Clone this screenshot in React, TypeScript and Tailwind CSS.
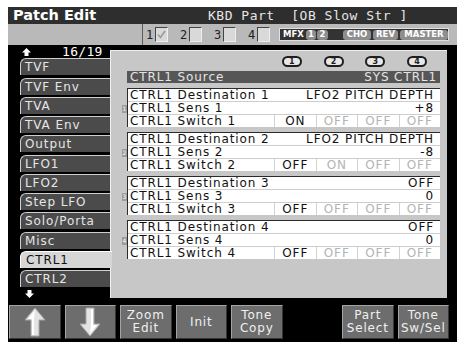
import type { ReactNode } from "react";

const tabs = [
  "TVF",
  "TVF Env",
  "TVA",
  "TVA Env",
  "Output",
  "LFO1",
  "LFO2",
  "Step LFO",
  "Solo/Porta",
  "Misc",
  "CTRL1",
  "CTRL2",
];

type Group = {
  n: number;
  dest: string;
  sens: string;
  sw: string[];
  on: number;
};

const groups: Group[] = [
  { n: 1, dest: "LFO2 PITCH DEPTH", sens: "+8", sw: ["ON", "OFF", "OFF", "OFF"], on: 0 },
  { n: 2, dest: "LFO2 PITCH DEPTH", sens: "-8", sw: ["OFF", "ON", "OFF", "OFF"], on: 0 },
  { n: 3, dest: "OFF", sens: "0", sw: ["OFF", "OFF", "OFF", "OFF"], on: 0 },
  { n: 4, dest: "OFF", sens: "0", sw: ["OFF", "OFF", "OFF", "OFF"], on: 0 },
];

function BigArrow({ down = false }: { down?: boolean }) {
  return (
    <svg width="22" height="30" viewBox="0 0 22 30" className={down ? "rotate-180" : ""} aria-hidden>
      <polygon points="11,1 21,13 15,13 15,29 7,29 7,13 1,13" fill="#e4e4e4" stroke="#a8a8a8" strokeWidth="1" />
      <polygon points="11,3 4,12 8,12 8,28 10,28 10,12" fill="#ffffff" />
    </svg>
  );
}

function SmallArrow({ down = false }: { down?: boolean }) {
  return (
    <svg width="9" height="8" viewBox="0 0 9 8" className={down ? "rotate-180" : ""} aria-hidden>
      <polygon points="4.5,0 9,4.5 6.5,4.5 6.5,8 2.5,8 2.5,4.5 0,4.5" fill="#ffffff" />
    </svg>
  );
}

function PadButton({ children }: { children?: ReactNode }) {
  return (
    <div className="flex h-[34px] flex-col items-center justify-center border border-t-[#a4a4a4] border-l-[#a4a4a4] border-r-[#363636] border-b-[#363636] bg-[#6d6d6d] text-center text-[12px] leading-[13px] tracking-[0.8px] text-[#f0f0f0]">
      {children}
    </div>
  );
}

function Check({ n, checked }: { n: number; checked?: boolean }) {
  return (
    <div className="flex items-center gap-[1px]">
      <span className="w-[8px] font-['DejaVu_Sans_Mono',monospace] text-[12px] leading-none text-[#222]">{n}</span>
      <span className="flex h-[15px] w-[13px] items-center justify-center border border-t-[#444] border-l-[#444] border-r-[#eee] border-b-[#eee] bg-[#d9d9d9]">
        {checked ? (
          <svg width="9" height="9" viewBox="0 0 9 9" aria-hidden>
            <path d="M1 4.5 L3.5 7.5 L8 1" fill="none" stroke="#9a9a9a" strokeWidth="1.6" />
          </svg>
        ) : null}
      </span>
    </div>
  );
}

function Chip({ children, w }: { children: ReactNode; w: string }) {
  return (
    <span className={`flex h-[10px] ${w} items-center justify-center rounded-[3px] bg-[#8e8e8e] text-[8.5px] font-bold leading-none text-white`}>
      {children}
    </span>
  );
}

export default function App() {
  return (
    <div className="h-[346px] w-[457px] overflow-hidden bg-white">
      <div className="ml-[8px] mt-[7px] flex h-[335px] w-[449px] flex-col bg-black font-['DejaVu_Sans',sans-serif]">
        {/* title bar */}
        <div className="flex h-[17px] items-center bg-[#2e2e2e]">
          <span className="w-[200px] pl-[5px] text-[14.5px] font-bold leading-none text-white">Patch Edit</span>
          <span className="whitespace-pre font-['DejaVu_Sans_Mono',monospace] text-[13px] leading-none tracking-[0.5px] text-[#e6e6e6]">
            KBD Part  [OB Slow Str ]
          </span>
        </div>

        {/* part switches + effect status */}
        <div className="flex h-[21px] items-center bg-[#b9b9b9]">
          <div className="w-[134px]" />
          <div className="flex h-full items-center gap-[12px] border-l border-[#5c5c5c] pl-[3px]">
            <Check n={1} checked />
            <Check n={2} />
            <Check n={3} />
            <Check n={4} />
          </div>
          <div className="ml-auto mr-[8px] flex h-[13px] w-[170px] items-center border border-[#e0e0e0] bg-[#333] pl-[3px]">
            <span className="w-[23px] text-[8.5px] font-bold leading-none text-white">MFX</span>
            <div className="flex gap-[1px]">
              <Chip w="w-[10px]">1</Chip>
              <Chip w="w-[11px]">2</Chip>
            </div>
            <div className="ml-[15px] flex gap-[2px]">
              <Chip w="w-[28px]">CHO</Chip>
              <Chip w="w-[25px]">REV</Chip>
              <Chip w="w-[48px]">MASTER</Chip>
            </div>
          </div>
        </div>

        {/* main */}
        <div className="flex h-[253px]">
          <div className="flex w-[102px] flex-col">
            <div className="flex h-[15px] items-center">
              <span className="ml-[14px] w-[40px]">
                <SmallArrow />
              </span>
              <span className="font-['DejaVu_Sans_Mono',monospace] text-[13px] leading-none tracking-[0.3px] text-white">16/19</span>
            </div>
            <div className="flex flex-col gap-[2.25px]">
              {tabs.map((t) =>
                t === "CTRL1" ? (
                  <div
                    key={t}
                    className="relative z-10 ml-[12px] flex h-[17px] w-[92px] items-center rounded-tl-[6px] border-t border-l border-[#ffffff] bg-[#d6d6d6] pl-[5px] text-[12px] tracking-[0.9px] text-[#111]"
                  >
                    {t}
                  </div>
                ) : (
                  <div
                    key={t}
                    className="ml-[12px] flex h-[17px] w-[90px] items-center rounded-tl-[6px] border-t border-l border-[#cfcfcf] bg-[#4b4b4b] pl-[4px] text-[12px] tracking-[0.9px] text-[#e6e6e6]"
                  >
                    {t}
                  </div>
                ),
              )}
            </div>
            <span className="ml-[17px] mt-[3px]">
              <SmallArrow down />
            </span>
          </div>

          <div className="mt-[5px] h-[248px] w-[337px] border-t border-l border-[#efefef] bg-[#c7c7c7] pl-[16px] pt-[5px] text-[12px] tracking-[0.9px] text-[#111]">
            {/* column heads */}
            <div className="flex h-[11px] w-[313px]">
              <div className="w-[146px]" />
              {[1, 2, 3, 4].map((n) => (
                <div key={n} className="flex flex-1 justify-center pr-[4px]">
                  <span className="flex h-[11px] w-[20px] items-center justify-center rounded-full border-2 border-[#1e1e1e] bg-[#e8e8e8] text-[8px] font-bold leading-none tracking-normal text-[#1e1e1e]">
                    {n}
                  </span>
                </div>
              ))}
            </div>

            <div className="mt-[4px] flex h-[12px] w-[313px] items-center justify-between bg-[#565656] px-[3px] leading-none text-[#e4e4e4]">
              <span>CTRL1 Source</span>
              <span>SYS CTRL1</span>
            </div>

            <div className="mt-[5px] flex w-[313px] flex-col gap-[5px]">
              {groups.map((g) => (
                <div key={g.n} className="border-t border-l border-[#2a2a2a] bg-white">
                  <div className="flex h-[13px] items-center justify-between border-b border-[#cdcdcd] pl-[2px] pr-[6px] leading-none">
                    <span>CTRL1 Destination {g.n}</span>
                    <span>{g.dest}</span>
                  </div>
                  <div className="relative flex h-[13px] items-center justify-between border-b border-[#cdcdcd] pl-[2px] pr-[6px] leading-none">
                    <span className="absolute left-[-6px] top-[3px] flex h-[8px] w-[5px] items-center justify-center bg-[#9c9c9c] text-[6px] leading-none tracking-normal text-white">
                      {g.n}
                    </span>
                    <span>CTRL1 Sens {g.n}</span>
                    <span>{g.sens}</span>
                  </div>
                  <div className="flex h-[12px] items-center leading-none">
                    <span className="w-[146px] pl-[2px]">CTRL1 Switch {g.n}</span>
                    {g.sw.map((v, i) => (
                      <span
                        key={i}
                        className={`flex h-full flex-1 items-center justify-center border-l border-[#d2d2d2] ${
                          i === g.on ? "text-[#111]" : "text-[#b4b4b4]"
                        }`}
                      >
                        {v}
                      </span>
                    ))}
                  </div>
                </div>
              ))}
            </div>
          </div>
        </div>

        {/* bottom pads */}
        <div className="grid w-[441px] grid-cols-8 gap-[4px] pl-[1px] pt-[7px]">
          <PadButton>
            <BigArrow />
          </PadButton>
          <PadButton>
            <BigArrow down />
          </PadButton>
          <PadButton>
            <span>Zoom</span>
            <span>Edit</span>
          </PadButton>
          <PadButton>
            <span>Init</span>
          </PadButton>
          <PadButton>
            <span>Tone</span>
            <span>Copy</span>
          </PadButton>
          <div />
          <PadButton>
            <span>Part</span>
            <span>Select</span>
          </PadButton>
          <PadButton>
            <span>Tone</span>
            <span>Sw/Sel</span>
          </PadButton>
        </div>
      </div>
    </div>
  );
}
